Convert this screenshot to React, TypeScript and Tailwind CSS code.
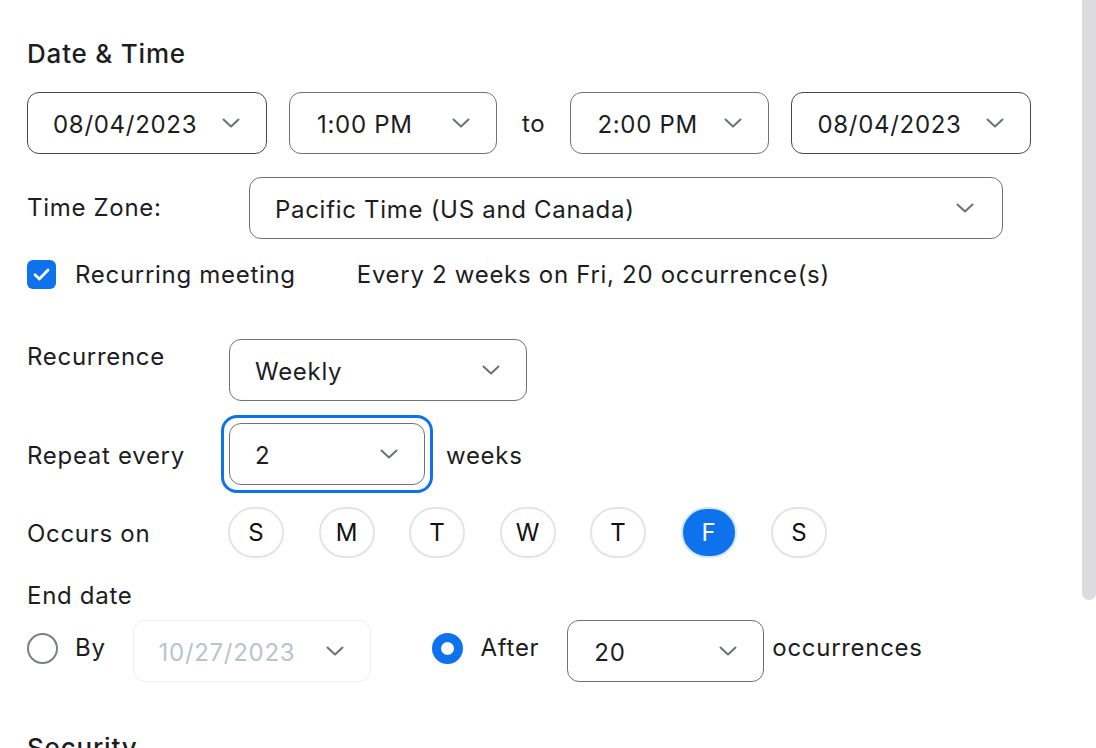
import type { ReactNode } from 'react';

const FONT = { fontFamily: 'Inter, "Noto Sans", "Liberation Sans", sans-serif' };

const DAYS = ['S', 'M', 'T', 'W', 'T', 'F', 'S'];

function Chevron({ color = '#6b7079' }: { color?: string }) {
  return (
    <svg width="18" height="10" viewBox="0 0 18 10" fill="none" className="shrink-0">
      <path d="M1.5 1.5 9 8.5l7.5-7" stroke={color} strokeWidth="2" strokeLinecap="round" strokeLinejoin="round" />
    </svg>
  );
}

function Select({
  value,
  className = '',
  dark = false,
  disabled = false,
}: {
  value: string;
  className?: string;
  dark?: boolean;
  disabled?: boolean;
}) {
  const border = disabled
    ? 'border-[#eceef1]'
    : dark
      ? 'border-[#45494f]'
      : 'border-[#6d727a]';

  return (
    <div
      className={`flex h-[62px] shrink-0 items-center justify-between rounded-[12px] border-[1.5px] bg-white pl-[25px] pr-[26px] ${border} ${className}`}
    >
      <span className={`pt-[3px] ${disabled ? 'text-[#b8c3cf]' : 'text-[#1d1d1f]'}`}>{value}</span>
      <Chevron />
    </div>
  );
}

function Label({ children, className = '' }: { children: ReactNode; className?: string }) {
  return <div className={`shrink-0 ${className}`}>{children}</div>;
}

export default function App() {
  return (
    <div
      className="flex h-screen w-full overflow-hidden bg-white text-[24px] leading-[32px] tracking-[0.7px] text-[#1d1d1f]"
      style={FONT}
    >
      <div className="flex-1 pl-[27px] pt-[38px]">
        <h2 className="h-[32px] text-[26px] font-medium leading-[32px] tracking-[0.8px]">Date &amp; Time</h2>

        <div className="mt-[21px] flex h-[64px] items-center">
          <Select value="08/04/2023" dark className="w-[240px]" />
          <Select value="1:00 PM" className="ml-[22px] w-[208px] pl-[27px]" />
          <span className="mx-[25px] pt-[2px]">to</span>
          <Select value="2:00 PM" className="w-[199px] pl-[26px]" />
          <Select value="08/04/2023" dark className="ml-[22px] w-[240px]" />
        </div>

        <div className="mt-[22px] flex h-[62px] items-center">
          <Label className="w-[222px]">Time Zone:</Label>
          <Select value="Pacific Time (US and Canada)" className="w-[754px] pr-[28px]" />
        </div>

        <div className="mt-[19px] flex h-[32px] items-center">
          <div className="flex h-[29px] w-[29px] items-center justify-center rounded-[6px] bg-[#0e72ed]">
            <svg width="17" height="13" viewBox="0 0 17 13" fill="none">
              <path d="M2 6.8 6.3 11 15 2" stroke="white" strokeWidth="2.8" strokeLinecap="round" strokeLinejoin="round" />
            </svg>
          </div>
          <span className="ml-[19px] pt-[2px]">Recurring meeting</span>
          <span className="ml-[61px] pt-[2px]">Every 2 weeks on Fri, 20 occurrence(s)</span>
        </div>

        <div className="mt-[49px] flex items-start">
          <Label className="w-[202px] pt-[2px]">Recurrence</Label>
          <Select value="Weekly" className="w-[298px]" />
        </div>

        <div className="mt-[14px] flex h-[78px] items-center">
          <Label className="w-[194px] pt-[3px]">Repeat every</Label>
          <div className="rounded-[16px] border-[3px] border-[#0e72ed] p-[5px]">
            <Select value="2" className="h-[62px] w-[196px] pl-[24px]" />
          </div>
          <span className="ml-[13px] pt-[3px]">weeks</span>
        </div>

        <div className="mt-[14px] flex h-[51px] items-center">
          <Label className="w-[201px] pt-[2px]">Occurs on</Label>
          <div className="flex gap-[34.5px]">
            {DAYS.map((d, i) => {
              const active = i === 5;
              return (
                <div
                  key={i}
                  className={`flex h-[51px] w-[56px] items-center justify-center rounded-full border-2 tracking-normal ${
                    active
                      ? 'border-[#d6e6fb] bg-[#0e72ed] text-white'
                      : 'border-[#e4e4e7] bg-white text-[#111]'
                  }`}
                >
                  {d}
                </div>
              );
            })}
          </div>
        </div>

        <div className="mt-[22px] h-[32px]">End date</div>

        <div className="mt-[8px] flex h-[62px] items-center">
          <div className="h-[31px] w-[31px] -translate-y-[3px] rounded-full border-2 border-[#7a7e85] bg-white" />
          <span className="ml-[17px] -translate-y-[3px]">By</span>
          <Select value="10/27/2023" disabled className="ml-[27px] w-[238px]" />
          <div className="ml-[61px] h-[31px] w-[31px] -translate-y-[3px] rounded-full border-[9px] border-[#0e72ed] bg-white" />
          <span className="ml-[18px] -translate-y-[3px]">After</span>
          <Select value="20" className="ml-[28px] w-[197px] pl-[26px]" />
          <span className="ml-[8px] -translate-y-[3px]">occurrences</span>
        </div>

        <h2 className="mt-[50px] text-[26px] font-medium leading-[32px] tracking-[0.8px]">Security</h2>
      </div>

      <div className="w-[14px] shrink-0">
        <div className="h-[600px] rounded-b-full bg-[#dcdce0]" />
      </div>
    </div>
  );
}
